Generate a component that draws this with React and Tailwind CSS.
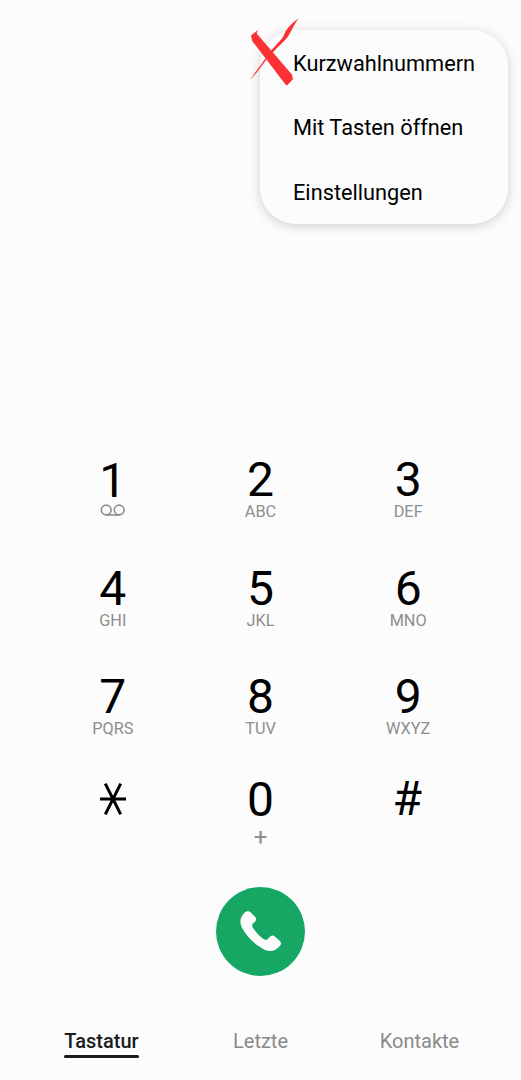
import React, { useState } from 'react';

const rows = [
  [
    { digit: '1', voicemail: true },
    { digit: '2', letters: 'ABC' },
    { digit: '3', letters: 'DEF' },
  ],
  [
    { digit: '4', letters: 'GHI' },
    { digit: '5', letters: 'JKL' },
    { digit: '6', letters: 'MNO' },
  ],
  [
    { digit: '7', letters: 'PQRS' },
    { digit: '8', letters: 'TUV' },
    { digit: '9', letters: 'WXYZ' },
  ],
];

const menuItems = ['Kurzwahlnummern', 'Mit Tasten öffnen', 'Einstellungen'];

function Voicemail() {
  return (
    <svg className="-mt-0.5" width="26" height="14" viewBox="0 0 26 14" fill="none" stroke="#8e8e8e" strokeWidth="1.6">
      <circle cx="6.2" cy="7" r="4.9" />
      <circle cx="19.2" cy="7" r="4.9" />
      <path d="M6 12h13.4" />
    </svg>
  );
}

function Star() {
  return (
    <svg width="26" height="34" viewBox="0 0 26 34" fill="none" stroke="#000" strokeWidth="3">
      <path d="M0 17h26M5.3 1.7l15.4 30.6M20.7 1.7L5.3 32.3" />
    </svg>
  );
}

function RedCross() {
  return (
    <svg className="absolute -left-[11px] -top-[13px]" width="52" height="72" viewBox="0 0 52 72" fill="#fb3135">
      <path d="M8.8 13L2 18.6L3.2 24L36.3 67.2L38 68.4L44 62.3L42.9 57.4L7.7 16.6z" />
      <path d="M49.8 1.2C43 6 39 10.5 36.5 14.5C35 17.5 34.8 19.5 32.5 22C29 26 25 30 22 33.8L1.3 62.5C6 58.5 12.5 49 17.5 42.5L24.3 35C28 30.5 32.5 27 36.5 22.5C41.5 17.5 43.8 8.5 49.8 1.2z" />
    </svg>
  );
}

function Key({ digit, letters, voicemail }) {
  return (
    <button className="flex flex-col items-center">
      <span className={`text-[48px] leading-[48px] ${voicemail ? 'pt-px' : ''}`}>{digit}</span>
      {voicemail ? <Voicemail /> : <span className="text-[16.3px] leading-4 text-[#8e8e8e]">{letters}</span>}
    </button>
  );
}

export default function App() {
  const [tab, setTab] = useState('Tastatur');

  return (
    <div className="relative flex h-[1080px] w-[521px] flex-col overflow-hidden bg-[#fcfcfc] pt-[456px] font-['Roboto',sans-serif] text-black">
      {/* overflow menu */}
      <div className="absolute left-[260px] top-[30px] flex h-[194px] w-[248px] flex-col rounded-[36px] bg-[#fcfcfc] pl-[33px] pt-0.5 shadow-[0_2px_12px_rgba(0,0,0,0.18)]">
        {menuItems.map((item) => (
          <button key={item} className="h-[64.5px] shrink-0 whitespace-nowrap text-left text-[21.75px]">
            {item}
          </button>
        ))}
        <RedCross />
      </div>

      {/* keypad */}
      <div className="ml-[39px] w-[443px]">
        {rows.map((row) => (
          <div key={row[0].digit} className="grid h-[108.5px] grid-cols-3 items-start">
            {row.map((key) => (
              <Key key={key.digit} {...key} />
            ))}
          </div>
        ))}
        <div className="-mt-[6px] grid h-[111px] grid-cols-3 items-start">
          <button className="flex justify-center pt-1.5">
            <Star />
          </button>
          <button className="flex flex-col items-center">
            <span className="text-[48px] leading-[48px]">0</span>
            <span className="text-2xl leading-[26px] text-[#8e8e8e]">+</span>
          </button>
          <button className="-mt-px pr-[2px] text-[48px] leading-[48px]">#</button>
        </div>
      </div>

      <button className="ml-[216px] flex size-[89px] shrink-0 items-center justify-center rounded-full bg-[#16a765]">
        <svg width="42" height="42" viewBox="0 0 42 42" fill="#fcfcfc">
          <path d="M5 2.3C7 .7 9.3.8 10.8 2.4L15.2 7C16.7 8.8 16.5 10.2 15.2 11.4L13.2 13.2C12 14.3 11.9 15.8 12.7 17.2C15.2 21.8 19.3 26.4 23.8 29.2C25.3 30.1 26.7 30 27.9 28.9L30.2 26.5C31.7 25.1 33.2 25.1 34.6 26.3L39.7 30.8C41.4 32.4 41.4 34.3 39.8 36C36.2 40.6 30.5 42.6 24.6 39.8C15.7 35.5 6.2 26 1.7 17.2C-1 11.5 .6 5.8 5 2.3z" />
        </svg>
      </button>

      <nav className="mt-[51px] flex">
        {['Tastatur', 'Letzte', 'Kontakte'].map((name) => (
          <button
            key={name}
            onClick={() => setTab(name)}
            className="flex w-[159px] justify-center first:ml-[22px] text-[20px] leading-7"
          >
            <span
              className={
                tab === name
                  ? 'relative font-medium text-[#1b1b1f] after:absolute after:inset-x-0 after:top-[28px] after:h-[3px] after:rounded-full after:bg-[#1b1b1f]'
                  : 'text-[#8a8a8a]'
              }
            >
              {name}
            </span>
          </button>
        ))}
      </nav>
    </div>
  );
}
